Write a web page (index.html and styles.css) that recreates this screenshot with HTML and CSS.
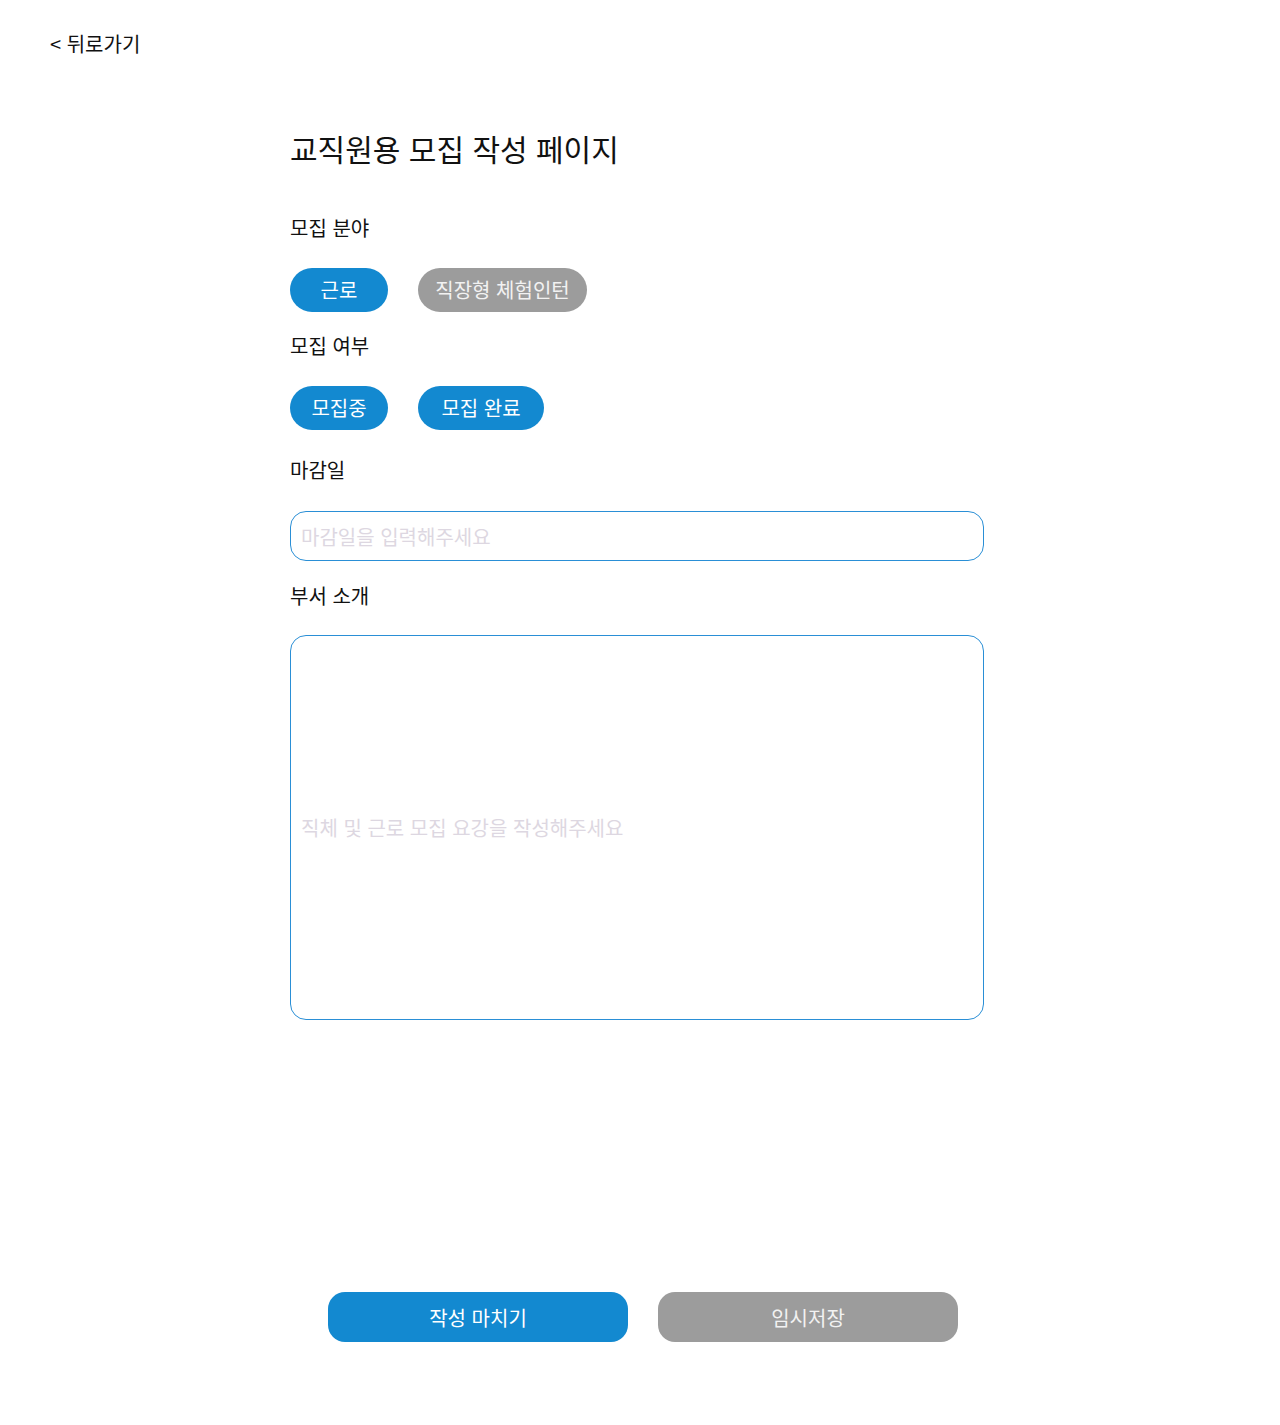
FILE: index.html
```html
<!DOCTYPE html>
<html lang="ko">
<head>
<meta charset="utf-8">
<title>교직원용 모집 작성 페이지</title>
<link rel="stylesheet" href="styles.css">
</head>
<body>
<header class="top">
  <a class="back" href="#">&lt; 뒤로가기</a>
</header>
<main class="form">
  <h1 class="title">교직원용 모집 작성 페이지</h1>

  <div class="label label-first">모집 분야</div>
  <div class="chips">
    <button class="chip chip-on chip-w98">근로</button>
    <button class="chip chip-off chip-w169">직장형 체험인턴</button>
  </div>

  <div class="label label-second">모집 여부</div>
  <div class="chips">
    <button class="chip chip-on chip-w98">모집중</button>
    <button class="chip chip-on chip-w126">모집 완료</button>
  </div>

  <div class="label label-mid">마감일</div>
  <input class="field field-short" type="text" placeholder="마감일을 입력해주세요">

  <div class="label label-after-input">부서 소개</div>
  <input class="field field-tall" type="text" placeholder="직체 및 근로 모집 요강을 작성해주세요">

  <div class="actions">
    <button class="action action-primary">작성 마치기</button>
    <button class="action action-secondary">임시저장</button>
  </div>
</main>
</body>
</html>
```

FILE: styles.css
```css
* { box-sizing: border-box; }

html, body {
  margin: 0;
  padding: 0;
  background: #ffffff;
}

body {
  width: 1280px;
  min-height: 1425px;
  font-family: "Noto Sans CJK KR", "Noto Sans", sans-serif;
  color: #111111;
}

.top {
  padding: 30px 0 0 50px;
  height: 57px;
}

.back {
  font-size: 20px;
  line-height: 27px;
  color: #111111;
  text-decoration: none;
}

.form {
  margin-left: 290px;
  width: 694px;
  display: flex;
  flex-direction: column;
  align-items: flex-start;
}

.title {
  margin: 71px 0 0 0;
  font-size: 30px;
  line-height: 40px;
  font-weight: 400;
  color: #111111;
}

.label {
  font-size: 20px;
  line-height: 26px;
  color: #111111;
}

.label-first { margin-top: 47px; }
.label-second { margin-top: 21px; }
.label-mid { margin-top: 27px; }
.label-after-input { margin-top: 22px; }

.chips {
  margin-top: 27px;
  display: flex;
  gap: 30px;
}

.chip {
  height: 44px;
  padding: 0;
  border: none;
  border-radius: 22px;
  font-family: inherit;
  font-size: 20px;
  line-height: 44px;
  color: #ffffff;
  cursor: pointer;
}

.chip-w98 { width: 98px; }
.chip-w126 { width: 126px; }
.chip-w169 { width: 169px; }

.chip-on { background: #1389d0; }
.chip-off { background: #9c9c9c; color: #f2f2f2; }

.field {
  display: block;
  width: 694px;
  margin-top: 28px;
  padding: 0 10px;
  border: 1px solid #2a8fd6;
  border-radius: 16px;
  font-family: inherit;
  font-size: 20px;
  color: #111111;
  background: #ffffff;
  outline: none;
}

.field::placeholder { color: #ddd7e1; }

.field-short { height: 50px; }
.field-tall { height: 385px; margin-top: 26px; }

.actions {
  margin-top: 272px;
  margin-left: 38px;
  display: flex;
  gap: 30px;
}

.action {
  width: 300px;
  height: 50px;
  border: none;
  border-radius: 17px;
  font-family: inherit;
  font-size: 20px;
  color: #ffffff;
  cursor: pointer;
}

.action-primary { background: #1389d0; }
.action-secondary { background: #9c9c9c; color: #f2f2f2; }
```
